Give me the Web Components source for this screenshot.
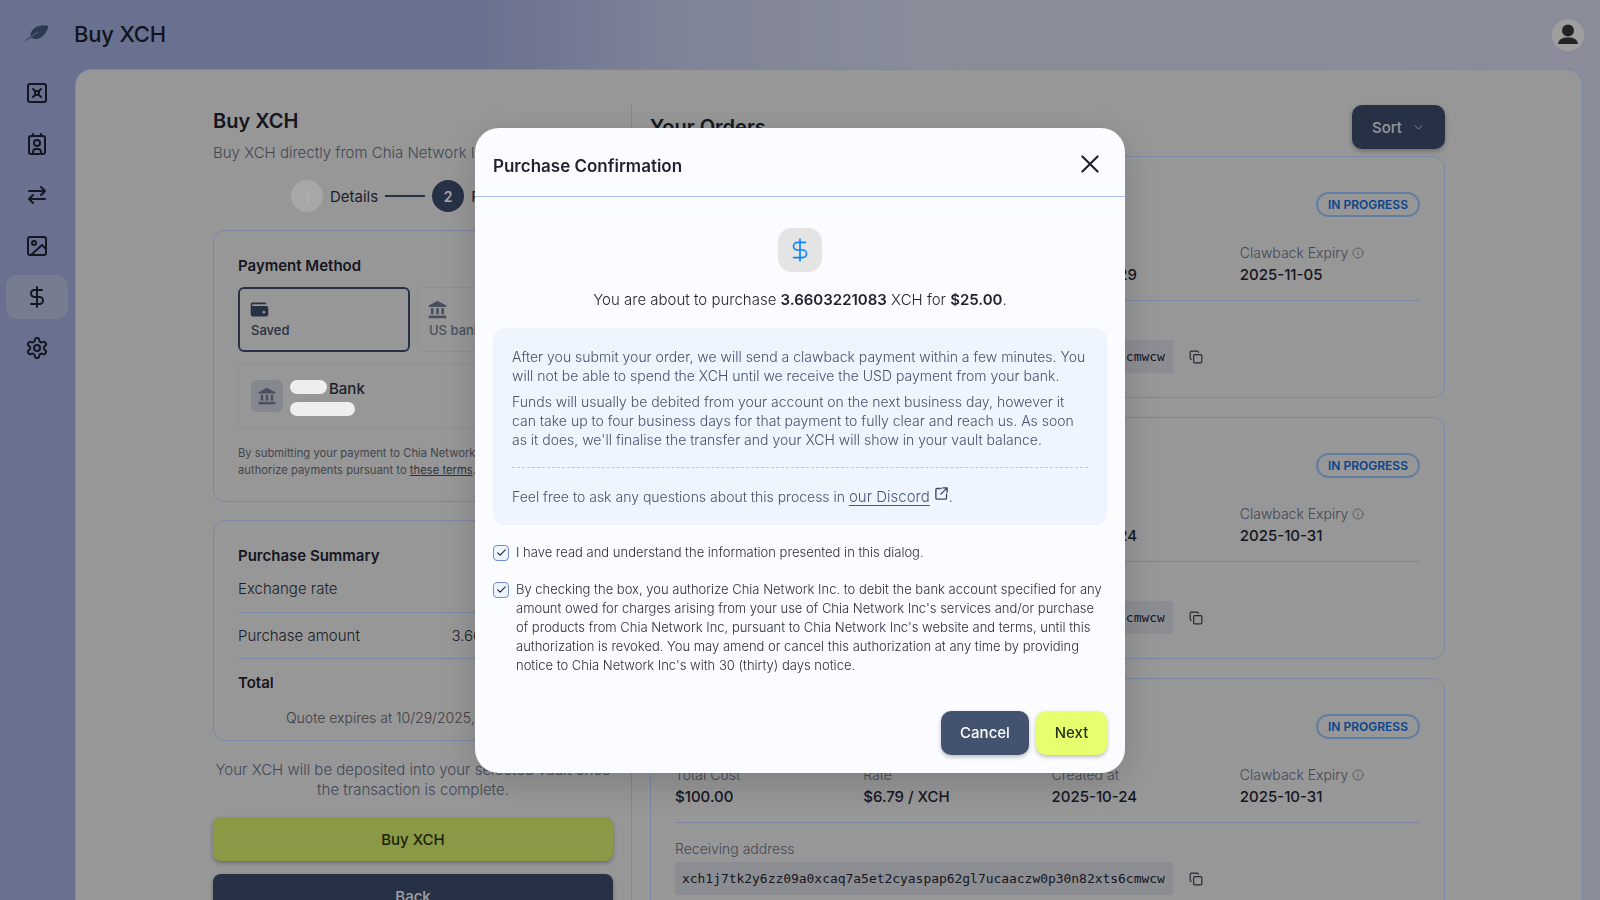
<!DOCTYPE html>
<html>
<head>
<meta charset="utf-8">
<title>Buy XCH</title>
<style>
  html, body{
    margin: 0;
    height: 100%;
    overflow: hidden;
  }
  body{
    font-family: Inter, "Liberation Sans", sans-serif;
    color: #1e2230;
  }
</style>
</head>
<body>

<app-shell>
  <side-nav slot="nav"></side-nav>
  <top-bar slot="top" title="Buy XCH"></top-bar>
  <main-panel slot="main">
    <buy-form slot="left"></buy-form>
    <order-list slot="right">
      <order-card created="2025-10-29" expiry="2025-11-05" cost="" rate=""></order-card>
      <order-card created="2025-10-24" expiry="2025-10-31" cost="" rate=""></order-card>
      <order-card created="2025-10-24" expiry="2025-10-31" cost="$100.00" rate="$6.79 / XCH"></order-card>
    </order-list>
  </main-panel>
</app-shell>

<purchase-modal>
  <span slot="xch">3.6603221083</span>
  <span slot="usd">$25.00</span>
</purchase-modal>

<script>
const ICONS = {
  vault: '<rect x="3" y="3" width="18" height="18" rx="2"/><path d="M8 8l2.400 2.400M16 8l-2.400 2.400M8 16l2.400-2.400M16 16l-2.400-2.400"/><circle cx="12" cy="12" r="2"/>',
  contact: '<rect x="4" y="4" width="16" height="18" rx="2"/><path d="M8 2v2M16 2v2"/><circle cx="12" cy="11" r="3"/><path d="M8 22v-2a3 3 0 0 1 3-3h2a3 3 0 0 1 3 3v2"/>',
  swap: '<path d="M4 8h16M16 4l4 4-4 4M20 16H4M8 12l-4 4 4 4"/>',
  image: '<rect x="3" y="3" width="18" height="18" rx="2"/><circle cx="9" cy="9" r="2"/><path d="M21 15l-4-4L6 21"/>',
  dollar: '<path d="M12 2v20M17 5H9.500a3.500 3.500 0 0 0 0 7h5a3.500 3.500 0 0 1 0 7H6"/>',
  gear: '<path d="M12.220 2h-.44a2 2 0 0 0-2 2v.18a2 2 0 0 1-1 1.730l-.43.25a2 2 0 0 1-2 0l-.15-.08a2 2 0 0 0-2.730.73l-.22.38a2 2 0 0 0 .73 2.730l.15.1a2 2 0 0 1 1 1.720v.51a2 2 0 0 1-1 1.740l-.15.09a2 2 0 0 0-.73 2.730l.22.38a2 2 0 0 0 2.730.73l.15-.08a2 2 0 0 1 2 0l.43.25a2 2 0 0 1 1 1.730V20a2 2 0 0 0 2 2h.44a2 2 0 0 0 2-2v-.18a2 2 0 0 1 1-1.730l.43-.25a2 2 0 0 1 2 0l.15.08a2 2 0 0 0 2.730-.73l.22-.39a2 2 0 0 0-.73-2.730l-.15-.08a2 2 0 0 1-1-1.740v-.5a2 2 0 0 1 1-1.740l.15-.09a2 2 0 0 0 .73-2.730l-.22-.38a2 2 0 0 0-2.730-.73l-.15.08a2 2 0 0 1-2 0l-.43-.25a2 2 0 0 1-1-1.730V4a2 2 0 0 0-2-2z"/><circle cx="12" cy="12" r="3"/>',
  close: '<path d="M5 5l14 14M19 5L5 19"/>',
  copy: '<rect x="8" y="8" width="14" height="14" rx="2"/><path d="M4 16a2 2 0 0 1-2-2V4a2 2 0 0 1 2-2h10a2 2 0 0 1 2 2"/>',
  chevron: '<path d="M6 9l6 6 6-6"/>',
  external: '<path d="M11 4H5a2 2 0 0 0-2 2v13a2 2 0 0 0 2 2h13a2 2 0 0 0 2-2v-6"/><path d="M14 3h7v7M21 3L11 13"/>',
  info: '<circle cx="12" cy="12" r="10"/><path d="M12 16v-4M12 8h.01"/>',
  check: '<path d="M5 12.500l4.500 4.500L19 7"/>'
};
const BANK = '<path d="M12 2L2 7.500V9h20V7.500z"/><rect x="4.500" y="10.500" width="3" height="7"/><rect x="10.500" y="10.500" width="3" height="7"/><rect x="16.500" y="10.500" width="3" height="7"/><rect x="2" y="19" width="20" height="3"/>';
const WALLET = '<path d="M4 4h14a2 2 0 0 1 2 2H4.500a1 1 0 0 0 0 2H20a2 2 0 0 1 2 2v8a2 2 0 0 1-2 2H4a2 2 0 0 1-2-2V6a2 2 0 0 1 2-2zm13 9.500a1.500 1.500 0 1 0 0 3 1.500 1.500 0 0 0 0-3z" fill-rule="evenodd"/>';

function icon(name, size, width){
  return `<svg width="${size}" height="${size}" viewBox="0 0 24 24" fill="none" stroke="currentColor" stroke-width="${width || 2}" stroke-linecap="round" stroke-linejoin="round">${ICONS[name]}</svg>`;
}
function solid(body, size){
  return `<svg width="${size}" height="${size}" viewBox="0 0 24 24" fill="currentColor">${body}</svg>`;
}

class AppShell extends HTMLElement{
  constructor(){
    super();
    this.attachShadow({mode:'open'}).innerHTML = `
      <style>
        :host{
          display: grid;
          grid-template-columns: 75px 1fr;
          grid-template-rows: 69px 1fr;
          height: 100vh;
          overflow: hidden;
          background: linear-gradient(90deg, #99a3ce 0%, #99a3ce 30%, #b3bad8 41%, #c7ccdc 60%, #c6cbdc 100%);
        }
        .top{ grid-column: 1 / 3; }
      </style>
      <div class="top"><slot name="top"></slot></div>
      <slot name="nav"></slot>
      <slot name="main"></slot>
    `;
  }
}

class SideNav extends HTMLElement{
  constructor(){
    super();
    const items = [['vault'],['contact'],['swap'],['image'],['dollar',true],['gear']];
    this.attachShadow({mode:'open'}).innerHTML = `
      <style>
        :host{
          display: flex;
          flex-direction: column;
          gap: 7px;
          padding: 2px 7px 0 6px;
          color: #1e2230;
        }
        div{
          height: 44px;
          border-radius: 12px;
          display: flex;
          align-items: center;
          justify-content: center;
        }
        .on{ background: #aab3cf; }
        svg{ display: block; }
      </style>
      ${items.map(i => `<div class="${i[1] ? 'on' : ''}">${icon(i[0], 24)}</div>`).join('')}
    `;
  }
}

class TopBar extends HTMLElement{
  constructor(){
    super();
    this.attachShadow({mode:'open'}).innerHTML = `
      <style>
        :host{
          display: flex;
          align-items: center;
          height: 69px;
          box-sizing: border-box;
          padding: 0 16px 0 25px;
        }
        .logo{ width: 49px; display: flex; margin-top: -3px; }
        h1{
          margin: -2px 0 0;
          font-size: 22px;
          line-height: 32px;
          font-weight: 500;
          letter-spacing: -.2px;
          flex: 1;
          color: #1a1e2a;
        }
        .avatar{
          width: 32px;
          height: 32px;
          border-radius: 50%;
          background: #e3e3e3;
          display: flex;
          align-items: center;
          justify-content: center;
          color: #333333;
        }
      </style>
      <div class="logo">
        <svg width="24" height="16" viewBox="0 0 24 16">
          <path fill="#3f5375" d="M6 12.500C4 7 9 2 14 1c3-.5 6-.5 9.500-.2C22.500 5 20 11 14 13.500c-3 1-6 .5-8-1z"/>
          <path stroke="#3f5375" stroke-width="1" fill="none" d="M.5 15.500L6 12"/>
          <path stroke="#98a2c8" stroke-width=".8" fill="none" d="M6 12L13 7"/>
        </svg>
      </div>
      <h1></h1>
      <div class="avatar">
        <svg width="24" height="24" viewBox="0 0 24 24" fill="currentColor"><circle cx="12" cy="7.500" r="6"/><path d="M2 21c.3-3.500 3-5.500 6.500-6.500h7c3.500 1 6.200 3 6.500 6.500z"/></svg>
      </div>
    `;
    this.shadowRoot.querySelector('h1').textContent = this.getAttribute('title');
    this.removeAttribute('title');
  }
}

class MainPanel extends HTMLElement{
  constructor(){
    super();
    this.attachShadow({mode:'open'}).innerHTML = `
      <style>
        :host{
          display: block;
          margin-right: 17px;
          min-height: 0;
          height: 900px;
          box-sizing: border-box;
          background: #d9d9d9;
          border: 1px solid #adc3ec;
          border-radius: 16px;
          padding: 35px 137px 0;
        }
        .cols{
          display: grid;
          grid-template-columns: 400px 1px 1fr;
          column-gap: 18px;
        }
        .rule{ background: #adc3ec; }
      </style>
      <div class="cols">
        <slot name="left"></slot>
        <div class="rule"></div>
        <slot name="right"></slot>
      </div>
    `;
  }
}

class StepDots extends HTMLElement{
  constructor(){
    super();
    this.attachShadow({mode:'open'}).innerHTML = `
      <style>
        :host{
          display: flex;
          align-items: center;
          justify-content: center;
          gap: 7px;
          height: 32px;
          padding-right: 2px;
          font-size: 15px;
          white-space: nowrap;
        }
        b{
          width: 32px;
          height: 32px;
          border-radius: 50%;
          display: flex;
          align-items: center;
          justify-content: center;
          font-size: 14px;
          font-weight: 600;
        }
        .done{ background: #f0f0f0; color: #ffffff; }
        .now{ background: #394764; color: #f2f2f2; }
        i{ width: 40px; height: 2px; background: #394764; }
        span{ color: #2a2f3e; }
      </style>
      <b class="done">1</b><span>Details</span><i></i><b class="now">2</b><span>Payment</span>
    `;
  }
}

class FormCard extends HTMLElement{
  constructor(){
    super();
    this.attachShadow({mode:'open'}).innerHTML = `
      <style>
        :host{
          display: block;
          border: 1px solid #adc3ec;
          border-radius: 12px;
          padding: 24px 24px 0;
          box-sizing: border-box;
        }
      </style>
      <slot></slot>
    `;
  }
}

class PayTile extends HTMLElement{
  constructor(){
    super();
    const on = this.hasAttribute('selected');
    this.attachShadow({mode:'open'}).innerHTML = `
      <style>
        :host{
          display: flex;
          flex-direction: column;
          justify-content: center;
          gap: 1px;
          height: 65px;
          box-sizing: border-box;
          border-radius: 6px;
          padding: 0 11px 2px;
          border: ${on ? '2px solid #394764' : '1px solid #cfcfcf'};
          color: ${on ? '#394764' : '#6a7289'};
          font-size: 13px;
          font-weight: 500;
          white-space: nowrap;
        }
        svg{ display: block; margin-left: -2px; }
        span{ line-height: 18px; }
      </style>
      ${this.getAttribute('kind') === 'wallet' ? solid(WALLET, 21) : solid(BANK, 21)}
      <span><slot></slot></span>
    `;
  }
}

class SavedBank extends HTMLElement{
  constructor(){
    super();
    this.attachShadow({mode:'open'}).innerHTML = `
      <style>
        :host{
          display: flex;
          gap: 7px;
          height: 66px;
          box-sizing: border-box;
          border: 1px solid #cfcfcf;
          border-radius: 6px;
          padding: 16px 12px 0;
          font-size: 15px;
          font-weight: 500;
          color: #2a2f3e;
        }
        .tile{
          width: 32px;
          height: 32px;
          border-radius: 6px;
          background: #bdc2cb;
          color: #6a7289;
          display: flex;
          align-items: center;
          justify-content: center;
        }
        .lines{ display: flex; flex-direction: column; gap: 8px; }
        .row{ display: flex; align-items: center; gap: 2px; height: 14px; }
        .row span:last-child{ padding-top: 2px; }
        .pill{
          display: block;
          height: 14px;
          border-radius: 7px;
          background: #eeeeee;
          position: relative;
          z-index: 20;
        }
      </style>
      <div class="tile">${solid(BANK, 20)}</div>
      <div class="lines">
        <div class="row"><span class="pill" style="width:37px"></span><span>Bank</span></div>
        <span class="pill" style="width:65px"></span>
      </div>
    `;
  }
}

class SumRow extends HTMLElement{
  constructor(){
    super();
    const strong = this.hasAttribute('strong');
    this.attachShadow({mode:'open'}).innerHTML = `
      <style>
        :host{
          display: flex;
          justify-content: space-between;
          align-items: center;
          height: 46px;
          box-sizing: border-box;
          font-size: 15px;
          font-weight: ${strong ? 600 : 300};
          border-bottom: ${this.hasAttribute('line') ? '1px solid #adc3ec' : '0'};
          color: ${strong ? '#1e2230' : '#2a2f3e'};
          white-space: nowrap;
        }
      </style>
      <span><slot name="label"></slot></span><span><slot name="value"></slot></span>
    `;
  }
}

class BuyForm extends HTMLElement{
  constructor(){
    super();
    this.attachShadow({mode:'open'}).innerHTML = `
      <style>
        :host{ display: block; }
        h2{
          margin: 2px 0 0;
          font-size: 20px;
          line-height: 28px;
          font-weight: 600;
        }
        .sub{
          margin: 6px 0 15px;
          font-size: 15px;
          font-weight: 300;
          line-height: 24px;
          color: #5f677e;
          white-space: nowrap;
        }
        form-card{ margin-top: 18px; }
        .pay{ height: 272px; }
        .sum{ height: 221px; }
        h3{
          margin: -1px 0 0;
          font-size: 15px;
          line-height: 24px;
          font-weight: 600;
        }
        .tiles{
          display: grid;
          grid-template-columns: 172px 172px;
          gap: 7px;
          margin: 9px 0 11px;
        }
        .terms{
          margin: 16px 0 0;
          font-size: 11.250px;
          line-height: 17px;
          color: #5f6470;
        }
        .terms u{ color: #444956; }
        .quote{
          margin: 3px 0 0;
          font-size: 14px;
          font-weight: 300;
          line-height: 20px;
          text-align: center;
          color: #585860;
          white-space: nowrap;
        }
        .sum h3{ margin-bottom: -2px; }
        .sum sum-row:first-of-type{ height: 47px; padding-bottom: 2px; }
        .note{
          margin: 19px 0 17px;
          font-size: 15px;
          font-weight: 300;
          line-height: 20px;
          text-align: center;
          color: #5f677e;
        }
        .btn{
          height: 44px;
          border-radius: 8px;
          display: flex;
          align-items: center;
          justify-content: center;
          font-size: 15px;
          font-weight: 500;
          box-shadow: 0 2px 4px rgba(0,0,0,.3);
        }
        .buy{ background: #c6dc65; color: #2a3010; margin-bottom: 13px; }
        .back{ background: #394764; color: #e6e6e6; }
      </style>
      <h2>Buy XCH</h2>
      <p class="sub">Buy XCH directly from Chia Network Inc.</p>
      <step-dots></step-dots>
      <form-card class="pay">
        <h3>Payment Method</h3>
        <div class="tiles">
          <pay-tile kind="wallet" selected>Saved</pay-tile>
          <pay-tile kind="bank">US bank account</pay-tile>
        </div>
        <saved-bank></saved-bank>
        <p class="terms">By submitting your payment to Chia Network Inc., you<br>authorize payments pursuant to <u>these terms</u>.</p>
      </form-card>
      <form-card class="sum">
        <h3>Purchase Summary</h3>
        <sum-row line><span slot="label">Exchange rate</span><span slot="value">$6.83 / XCH</span></sum-row>
        <sum-row line><span slot="label">Purchase amount</span><span slot="value">3.6603221083 XCH</span></sum-row>
        <sum-row strong><span slot="label">Total</span><span slot="value">$25.00</span></sum-row>
        <p class="quote">Quote expires at 10/29/2025, 10:00 AM</p>
      </form-card>
      <p class="note">Your XCH will be deposited into your selected vault once the transaction is complete.</p>
      <div class="btn buy">Buy XCH</div>
      <div class="btn back">Back</div>
    `;
  }
}

class OrderList extends HTMLElement{
  constructor(){
    super();
    this.attachShadow({mode:'open'}).innerHTML = `
      <style>
        :host{ display: block; }
        header{
          display: flex;
          align-items: center;
          justify-content: space-between;
          height: 44px;
          margin-bottom: 7px;
        }
        h2{ margin: 0; font-size: 20px; font-weight: 600; }
        .sort{
          width: 93px;
          height: 44px;
          box-sizing: border-box;
          border-radius: 10px;
          background: #394764;
          color: #d8d8d8;
          display: flex;
          align-items: center;
          justify-content: center;
          gap: 10px;
          font-size: 15px;
          font-weight: 500;
          box-shadow: 0 2px 5px rgba(0,0,0,.3);
        }
        .list{ display: flex; flex-direction: column; gap: 19px; }
        svg{ display: block; }
      </style>
      <header><h2>Your Orders</h2><div class="sort">Sort ${icon('chevron', 13, 1.600)}</div></header>
      <div class="list"><slot></slot></div>
    `;
  }
}

class OrderCard extends HTMLElement{
  constructor(){
    super();
    const a = n => this.getAttribute(n) || '';
    this.attachShadow({mode:'open'}).innerHTML = `
      <style>
        :host{
          display: block;
          height: 242px;
          box-sizing: border-box;
          border: 1px solid #adc3ec;
          border-radius: 12px;
          padding: 35px 24px 0;
        }
        .top{ display: flex; justify-content: flex-end; }
        .badge{
          height: 25px;
          box-sizing: border-box;
          width: 104px;
          border: 2px solid #8cb4e8;
          border-radius: 13px;
          font-size: 12px;
          font-weight: 600;
          display: flex;
          align-items: center;
          justify-content: center;
          color: #0f63c8;
          white-space: nowrap;
        }
        .grid{
          display: grid;
          grid-template-columns: repeat(4, 1fr);
          column-gap: 8px;
          margin-top: 26px;
          padding-bottom: 13px;
          border-bottom: 1px solid #adc3ec;
        }
        .k{
          font-size: 14px;
          font-weight: 300;
          line-height: 20px;
          color: #5f677e;
          display: flex;
          align-items: center;
          gap: 4px;
        }
        .v{
          font-size: 15px;
          line-height: 24px;
          font-weight: 500;
          color: #1e2230;
        }
        .addr-label{
          margin-top: 16px;
          font-size: 14px;
          font-weight: 300;
          line-height: 20px;
          color: #5f677e;
        }
        .addr{
          display: flex;
          align-items: center;
          gap: 16px;
          margin-top: 3px;
        }
        code{
          display: block;
          height: 33px;
          line-height: 33px;
          padding: 0 8px 0 7px;
          background: #c9cbd2;
          font-family: "DejaVu Sans Mono", "Liberation Mono", monospace;
          font-size: 13px;
          letter-spacing: -.04px;
          color: #1e2230;
          white-space: nowrap;
        }
        svg{ display: block; }
        .i{ color: #7a7a80; }
        .c{ color: #343844; }
      </style>
      <div class="top"><span class="badge">IN PROGRESS</span></div>
      <div class="grid">
        <div><div class="k">Total Cost</div><div class="v">${a('cost')}</div></div>
        <div><div class="k">Rate</div><div class="v">${a('rate')}</div></div>
        <div><div class="k">Created at</div><div class="v">${a('created')}</div></div>
        <div><div class="k">Clawback Expiry <span class="i">${icon('info', 12, 1.800)}</span></div><div class="v">${a('expiry')}</div></div>
      </div>
      <div class="addr-label">Receiving address</div>
      <div class="addr">
        <code>xch1j7tk2y6zz09a0xcaq7a5et2cyaspap62gl7ucaaczw0p30n82xts6cmwcw</code>
        <span class="c">${icon('copy', 14, 2)}</span>
      </div>
    `;
  }
}

class CheckRow extends HTMLElement{
  constructor(){
    super();
    this.attachShadow({mode:'open'}).innerHTML = `
      <style>
        :host{
          display: flex;
          gap: 7px;
          font-size: 13px;
          font-weight: 300;
          line-height: 19px;
          color: #2a2f3e;
        }
        .box{
          flex: none;
          width: 16px;
          height: 16px;
          box-sizing: border-box;
          border: 1px solid #6f8fd0;
          border-radius: 4px;
          margin-top: 2px;
          background: #eef4ff;
          color: #1e2230;
          display: flex;
          align-items: center;
          justify-content: center;
        }
        svg{ display: block; }
      </style>
      <div class="box">${icon('check', 13, 2)}</div>
      <div><slot></slot></div>
    `;
  }
}

class PurchaseModal extends HTMLElement{
  constructor(){
    super();
    this.attachShadow({mode:'open'}).innerHTML = `
      <style>
        :host{
          position: fixed;
          left: 0;
          top: 0;
          width: 100vw;
          height: 100vh;
          z-index: 10;
          background-color: rgba(0,0,0,.3);
          display: flex;
          align-items: center;
          justify-content: center;
        }
        #modal{
          width: 650px;
          height: 645px;
          box-sizing: border-box;
          background: #fbfcff;
          border-radius: 24px;
          box-shadow: 0 10px 40px rgba(0,0,0,.18);
          display: flex;
          flex-direction: column;
          color: #1e2230;
        }
        header{
          flex: none;
          height: 69px;
          box-sizing: border-box;
          padding: 0 22px 0 18px;
          border-bottom: 1px solid #a9c3ee;
          display: flex;
          align-items: center;
          justify-content: space-between;
        }
        h2{
          margin: 8px 0 0;
          font-size: 17px;
          font-weight: 600;
        }
        header svg{ display: block; margin-top: 5px; }
        section{
          flex: 1;
          padding: 31px 18px 0;
          display: flex;
          flex-direction: column;
        }
        .coin{
          width: 44px;
          height: 44px;
          border-radius: 14px;
          background: #e4e4e4;
          color: #0a84ff;
          align-self: center;
          display: flex;
          align-items: center;
          justify-content: center;
        }
        .lead{
          margin: 16px 0 16px;
          text-align: center;
          font-size: 15px;
          font-weight: 300;
          line-height: 24px;
          color: #1e2230;
        }
        .lead b{ font-weight: 600; color: #1e2230; }
        .info{
          height: 197px;
          box-sizing: border-box;
          background: #eef5fe;
          border-radius: 12px;
          padding: 19px 19px 0;
          font-size: 14px;
          font-weight: 300;
          line-height: 19px;
          color: #46536b;
        }
        .info p{ margin: 0 0 7px; }
        .info hr{
          border: 0;
          border-top: 1px dashed #b9c6d6;
          margin: 18px 0 18px;
        }
        .info a{
          font-size: 15px;
          color: #46587c;
          text-decoration: underline;
          text-underline-offset: 3px;
        }
        .info svg{ vertical-align: 1px; color: #3a4a6a; }
        check-row{ margin-top: 18px; }
        check-row + check-row{ margin-top: 18px; }
        footer{
          flex: none;
          display: flex;
          justify-content: flex-end;
          gap: 7px;
          padding: 0 18px 18px;
        }
        .btn{
          height: 44px;
          border-radius: 10px;
          display: flex;
          align-items: center;
          justify-content: center;
          font-size: 15px;
          font-weight: 500;
          box-shadow: 0 2px 4px rgba(0,0,0,.25);
        }
        .cancel{ width: 88px; background: #43536f; color: #ffffff; }
        .next{ width: 71px; background: #e6ff6e; color: #2a3010; }
      </style>
      <div id="modal">
        <header><h2>Purchase Confirmation</h2>${icon('close', 26, 2)}</header>
        <section>
          <div class="coin">${icon('dollar', 26, 1.500)}</div>
          <p class="lead">You are about to purchase <b><slot name="xch"></slot></b> XCH for <b><slot name="usd"></slot></b>.</p>
          <div class="info">
            <p>After you submit your order, we will send a clawback payment within a few minutes. You will not be able to spend the XCH until we receive the USD payment from your bank.</p>
            <p>Funds will usually be debited from your account on the next business day, however it can take up to four business days for that payment to fully clear and reach us. As soon as it does, we'll finalise the transfer and your XCH will show in your vault balance.</p>
            <hr>
            Feel free to ask any questions about this process in <a>our Discord</a> ${icon('external', 15, 2.200)}.
          </div>
          <check-row>I have read and understand the information presented in this dialog.</check-row>
          <check-row>By checking the box, you authorize Chia Network Inc. to debit the bank account specified for any amount owed for charges arising from your use of Chia Network Inc's services and/or purchase of products from Chia Network Inc, pursuant to Chia Network Inc's website and terms, until this authorization is revoked. You may amend or cancel this authorization at any time by providing notice to Chia Network Inc's with 30 (thirty) days notice.</check-row>
        </section>
        <footer><div class="btn cancel">Cancel</div><div class="btn next">Next</div></footer>
      </div>
    `;
  }
}

customElements.define('app-shell', AppShell);
customElements.define('side-nav', SideNav);
customElements.define('top-bar', TopBar);
customElements.define('main-panel', MainPanel);
customElements.define('step-dots', StepDots);
customElements.define('form-card', FormCard);
customElements.define('pay-tile', PayTile);
customElements.define('saved-bank', SavedBank);
customElements.define('sum-row', SumRow);
customElements.define('buy-form', BuyForm);
customElements.define('order-list', OrderList);
customElements.define('order-card', OrderCard);
customElements.define('check-row', CheckRow);
customElements.define('purchase-modal', PurchaseModal);
</script>
</body>
</html>
